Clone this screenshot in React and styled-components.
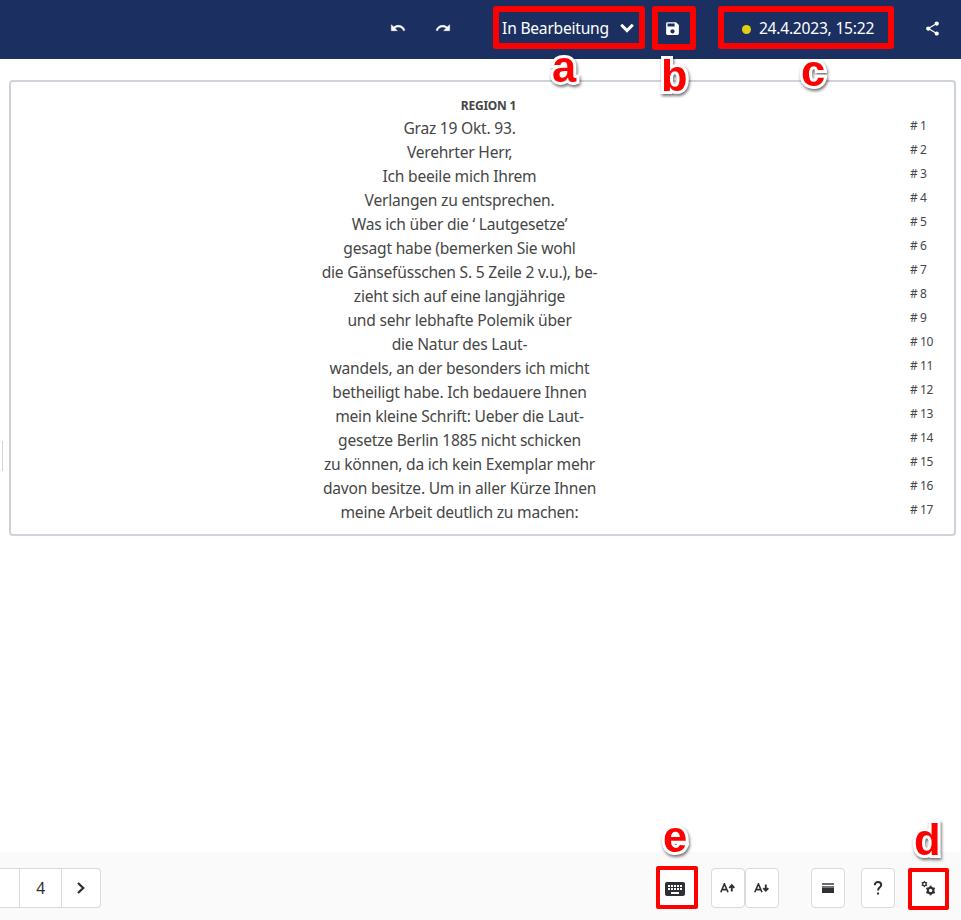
import React from "react";
import styled, { createGlobalStyle, css } from "styled-components";
import { MdUndo, MdRedo, MdSave, MdShare, MdKeyboard } from "react-icons/md";

const GlobalStyle = createGlobalStyle`
  * { box-sizing: border-box; }
  body {
    margin: 0;
    background: #fff;
    color: #464646;
    font-family: "Noto Sans", sans-serif;
    font-size: 15.6px;
    letter-spacing: -0.23px;
    overflow: hidden;
  }
`;

const Page = styled.div`
  display: flex;
  flex-direction: column;
  width: 961px;
  height: 920px;
`;

const TopBar = styled.header`
  display: flex;
  align-items: flex-start;
  flex: none;
  height: 59px;
  padding: 6px 0 0 389px;
  background: #1b3060;
  color: #fff;
`;

const IconAction = styled.button`
  display: flex;
  align-items: center;
  justify-content: center;
  flex: none;
  width: 17px;
  height: 44px;
  margin: 0 0 0 ${(p) => p.$gap || 0}px;
  padding: 0;
  border: 0;
  background: none;
  color: inherit;
  font-size: ${(p) => (p.$bold ? 16 : 17)}px;
  & path:last-child {
    stroke: currentColor;
    stroke-width: ${(p) => (p.$bold ? 0.7 : 0)}px;
  }
`;

const Highlight = styled.div`
  position: relative;
  display: flex;
  align-items: center;
  justify-content: center;
  flex: none;
  width: ${(p) => p.$w}px;
  height: ${(p) => p.$h}px;
  margin-left: ${(p) => p.$gap}px;
  padding: ${(p) => p.$pad || "0"};
  border: ${(p) => p.$border}px solid #f00;
  border-radius: ${(p) => (p.$border > 4 ? 3 : 2)}px;
  background: ${(p) => p.$fill || "transparent"};
`;

const Marker = styled.span`
  position: absolute;
  left: ${(p) => p.$x}px;
  top: ${(p) => p.$y}px;
  z-index: 2;
  color: #f00;
  font: bold 43.5px/48px "Liberation Sans", sans-serif;
  letter-spacing: 0;
  -webkit-text-stroke: 6px #fff;
  paint-order: stroke fill;
  filter: drop-shadow(1.5px 2px 1.5px rgba(0, 0, 0, 0.55));
`;

const Status = styled.span`
  display: flex;
  align-items: center;
  gap: 11px;
  line-height: 24px;
  white-space: nowrap;
`;

const SaveTime = styled(Status)`
  gap: 8px;
  padding-left: 4px;
`;

const Dot = styled.i`
  width: 9px;
  height: 9px;
  margin-top: 3px;
  border-radius: 50%;
  background: #e2cf12;
`;

const Main = styled.main`
  display: flex;
  align-items: flex-start;
  flex: 1;
  min-height: 0;
`;

const SplitHandle = styled.div`
  width: 1px;
  height: 30px;
  margin: 382px 6px 0 2px;
  background: #d4d4d5;
`;

const Region = styled.section`
  width: 947px;
  height: 456px;
  margin-top: 21px;
  padding: 13px 0 0;
  border: 2px solid #ced2da;
  border-radius: 4px;
`;

const RegionTitle = styled.h2`
  margin: 0;
  padding-left: 12px;
  font-size: 12px;
  line-height: 21px;
  font-weight: 700;
  text-align: center;
`;

const Line = styled.div`
  display: grid;
  grid-template-columns: 899px 44px;
  height: 24px;
  line-height: 24px;
`;

const LineText = styled.span`
  padding-right: 2px;
  text-align: center;
  white-space: pre;
`;

const LineNumber = styled.span`
  font-size: 12px;
  line-height: 20px;
  letter-spacing: -0.45px;
`;

const Footer = styled.footer`
  display: flex;
  align-items: flex-start;
  flex: none;
  height: 68px;
  padding-top: 16px;
  background: #fafafa;
  color: #2f3033;
`;

const Pager = styled.nav`
  display: flex;
  flex: none;
  width: 101px;
  height: 40px;
  border: 1px solid #d9dadb;
  border-left: 0;
  border-radius: 0 4px 4px 0;
  background: #fff;
`;

const PagerCell = styled.span`
  display: flex;
  align-items: center;
  justify-content: center;
  width: ${(p) => p.$w}px;
  & + & {
    border-left: 1px solid #d9dadb;
  }
`;

const Tool = styled.button`
  display: flex;
  align-items: center;
  justify-content: center;
  flex: none;
  width: 34px;
  height: 40px;
  margin: 0 0 0 ${(p) => p.$gap || 0}px;
  padding: 0;
  border: 1px solid #d9dadb;
  border-radius: 4px;
  background: #fff;
  color: inherit;
`;

const HighlightSlot = styled.div`
  flex: none;
  margin-top: ${(p) => p.$shift}px;
`;

const Glyph = styled.svg`
  display: block;
  flex: none;
  ${(p) =>
    p.$stroke &&
    css`
      fill: none;
      stroke: currentColor;
      stroke-width: ${p.$stroke};
    `}
`;

const lines = [
  "Graz 19 Okt. 93.",
  "Verehrter Herr,",
  "Ich beeile mich Ihrem",
  "Verlangen zu entsprechen.",
  "Was ich über die ‘ Lautgesetze’",
  "gesagt habe (bemerken Sie wohl",
  "die Gänsefüsschen S. 5 Zeile 2 v.u.), be-",
  "zieht sich auf eine langjährige",
  "und sehr lebhafte Polemik über",
  "die Natur des Laut-",
  "wandels, an der besonders ich micht",
  "betheiligt habe. Ich bedauere Ihnen",
  "mein kleine Schrift: Ueber die Laut-",
  "gesetze Berlin 1885 nicht schicken",
  "zu können, da ich kein Exemplar mehr",
  "davon besitze. Um in aller Kürze Ihnen",
  "meine Arbeit deutlich zu machen:",
];

const ChevronDown = () => (
  <Glyph width="14" height="10" viewBox="0 0 14 10" $stroke={3}>
    <path d="M1.2 1.8 7 7.6l5.8-5.8" />
  </Glyph>
);

const ChevronRight = () => (
  <Glyph width="8" height="12" viewBox="0 0 8 12" $stroke={2.3}>
    <path d="M1 1l5.2 5L1 11" />
  </Glyph>
);

const FontSizeIcon = ({ down }) => (
  <Glyph width="16" height="10" viewBox="0 0 16 10" $stroke={1.6}>
    <path d="M.8 9.3 4.4.9 8 9.3M2 6.6h4.8" />
    <path
      strokeWidth="1.9"
      d={down ? "M11.8 1.4v6M9.3 5.1l2.5 2.6 2.5-2.6" : "M11.8 8.4v-6M9.3 4.8l2.5-2.6 2.5 2.6"}
    />
  </Glyph>
);

const WeightIcon = () => (
  <Glyph width="12" height="10" viewBox="0 0 12 10">
    <path d="M0 0h12v2H0z" fill="#6c6c70" />
    <path d="M0 3h12v2H0z" fill="#77777b" />
    <path d="M0 5h12v5H0z" fill="#2f3033" />
  </Glyph>
);

const HelpIcon = () => (
  <Glyph width="10" height="14" viewBox="0 0 10 14" $stroke={2}>
    <path d="M1.8 4.2C1.8 2.2 3.1 1 5 1s3.2 1.1 3.2 2.9C8.2 6.3 5 6.4 5 9.6" />
    <path d="M5 11.5v2" />
  </Glyph>
);

const Gear = ({ x, y, r }) => (
  <g transform={`translate(${x} ${y})`}>
    <circle r={r} fill="none" stroke="currentColor" strokeWidth={r * 0.75} />
    {[30, 90, 150, 210, 270, 330].map((angle) => (
      <path
        key={angle}
        transform={`rotate(${angle})`}
        d={`M${r * 1.1} ${-r * 0.36}H${r * 1.72}V${r * 0.36}H${r * 1.1}z`}
        fill="currentColor"
      />
    ))}
  </g>
);

const GearsIcon = () => (
  <Glyph width="15" height="15" viewBox="0 0 15 15">
    <Gear x={3.4} y={3.1} r={1.8} />
    <Gear x={9.6} y={9.5} r={2.8} />
  </Glyph>
);

export default function App() {
  return (
    <Page>
      <GlobalStyle />
      <TopBar>
        <IconAction aria-label="Rückgängig" $bold><MdUndo /></IconAction>
        <IconAction aria-label="Wiederholen" $bold $gap={28}><MdRedo /></IconAction>
        <Highlight $w={152} $h={43} $gap={42} $border={6} $pad="0 2px 0 0">
          <Status>In Bearbeitung<ChevronDown /></Status>
          <Marker $x={53} $y={31}>a</Marker>
        </Highlight>
        <Highlight $w={44} $h={44} $gap={7} $border={6} $pad="0 3px 0 0">
          <MdSave size={17} />
          <Marker $x={3} $y={40}>b</Marker>
        </Highlight>
        <Highlight $w={176} $h={43} $gap={22} $border={6}>
          <SaveTime><Dot />24.4.2023, 15:22</SaveTime>
          <Marker $x={77} $y={35}>c</Marker>
        </Highlight>
        <IconAction aria-label="Teilen" $gap={30}><MdShare /></IconAction>
      </TopBar>
      <Main>
        <SplitHandle />
        <Region>
          <RegionTitle>REGION 1</RegionTitle>
          {lines.map((text, i) => (
            <Line key={i}>
              <LineText>{text}</LineText>
              <LineNumber># {i + 1}</LineNumber>
            </Line>
          ))}
        </Region>
      </Main>
      <Footer>
        <Pager>
          <PagerCell $w={19} />
          <PagerCell $w={42}>4</PagerCell>
          <PagerCell $w={39}><ChevronRight /></PagerCell>
        </Pager>
        <HighlightSlot $shift={-2}>
          <Highlight $w={42} $h={43} $gap={555} $border={4} $fill="#fff" $pad="2px 4px 0 0">
            <MdKeyboard size={24} />
            <Marker $x={3} $y={-57}>e</Marker>
          </Highlight>
        </HighlightSlot>
        <Tool $gap={13} aria-label="Schrift vergrößern"><FontSizeIcon /></Tool>
        <Tool aria-label="Schrift verkleinern"><FontSizeIcon down /></Tool>
        <Tool $gap={32} aria-label="Zeilenstärke"><WeightIcon /></Tool>
        <Tool $gap={16} aria-label="Hilfe"><HelpIcon /></Tool>
        <HighlightSlot $shift={0}>
          <Highlight $w={41} $h={42} $gap={13} $border={4} $fill="#fff" $pad="0 1px 2px 0">
            <GearsIcon />
            <Marker $x={2} $y={-56}>d</Marker>
          </Highlight>
        </HighlightSlot>
      </Footer>
    </Page>
  );
}
